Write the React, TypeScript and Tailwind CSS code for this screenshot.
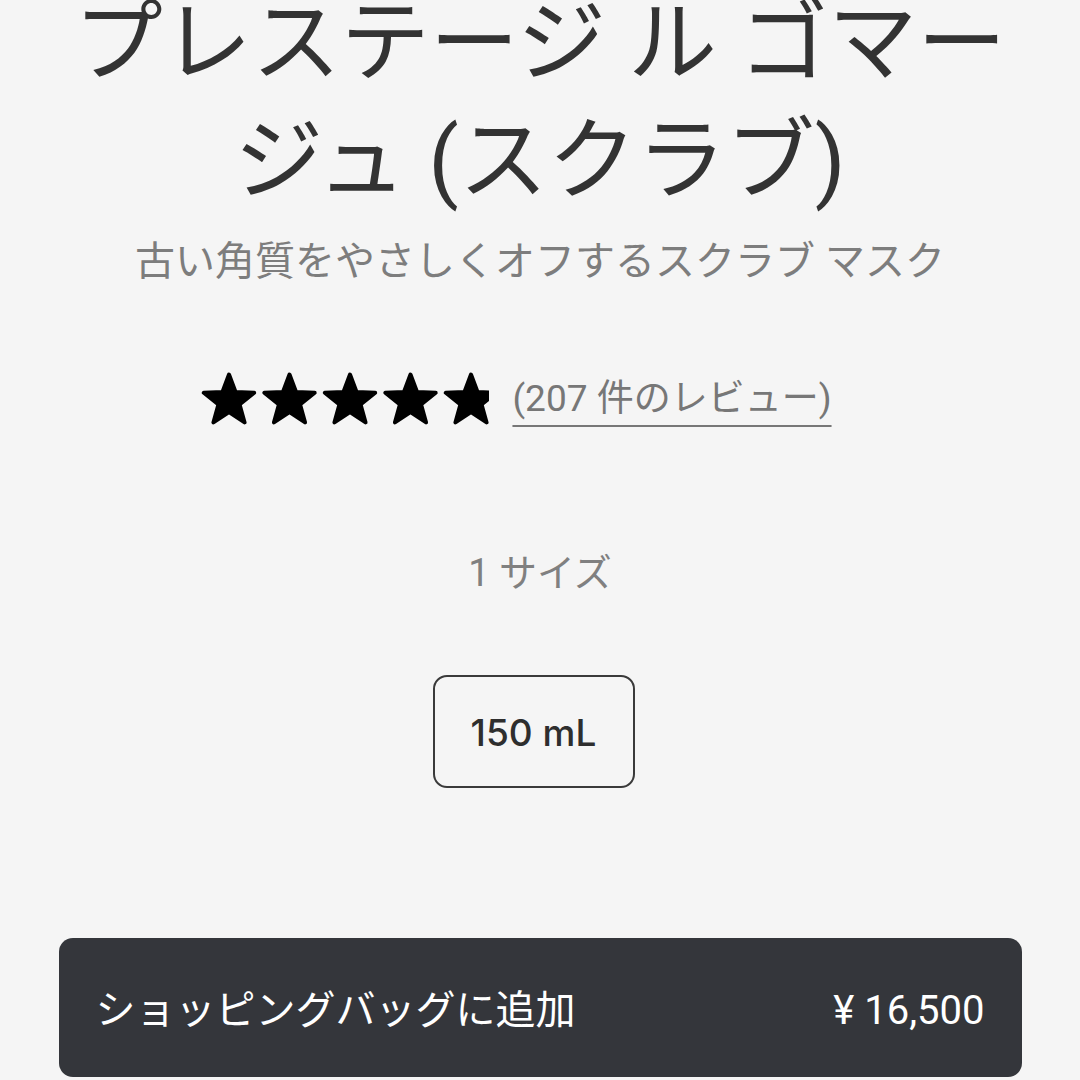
import React from 'react';

const jp = "font-['Roboto','Noto_Sans_CJK_JP',sans-serif]";

function starPath(cx: number, cy: number, r: number) {
  const pts: string[] = [];
  for (let k = 0; k < 10; k++) {
    const rad = k % 2 === 0 ? r : r * 0.42;
    const a = ((-90 + k * 36) * Math.PI) / 180;
    pts.push(`${(cx + rad * Math.cos(a)).toFixed(2)} ${(cy + rad * Math.sin(a)).toFixed(2)}`);
  }
  return `M${pts.join(' L')} Z`;
}

function Stars() {
  const d = starPath(28, 30, 26.5);
  return (
    <div className="w-[288px] h-[56px] overflow-hidden shrink-0">
      <svg width="310" height="56" viewBox="0 0 310 56">
        {[0, 1, 2, 3, 4].map((i) => (
          <path
            key={i}
            d={d}
            transform={`translate(${i * 60.5} 0)`}
            fill="#000"
            stroke="#000"
            strokeWidth="4"
            strokeLinejoin="round"
          />
        ))}
      </svg>
    </div>
  );
}

export default function App() {
  return (
    <div className={`w-[1080px] h-[1080px] overflow-hidden bg-[#f5f5f5] ${jp}`}>
      <div className="flex flex-col items-center">
        <h1 className="-mt-[16px] text-center text-[89px] leading-[118px] font-normal text-[#333333]">
          プレステージ ル ゴマー
          <br />
          ジュ (スクラブ)
        </h1>
        <p className="mt-[14px] text-[40px] leading-[56px] text-[#7d7d7d]">
          古い角質をやさしくオフするスクラブ マスク
        </p>

        <div className="mt-[81px] mr-[47px] flex items-center gap-[23px]">
          <Stars />
          <span className="text-[37px] leading-[48px] text-[#777777] underline decoration-2 underline-offset-[14px]">
            (207 件のレビュー)
          </span>
        </div>

        <p className="mt-[121px] text-[38px] leading-[50px] text-[#808080]">1 サイズ</p>

        <div className="mt-[77px] mr-[13px] w-[202px] h-[113px] rounded-[14px] border-2 border-[#3a3a3a] flex items-center justify-center">
          <span className="pt-[3px] font-['Inter','Noto_Sans_CJK_JP',sans-serif] text-[37px] font-medium text-[#2e2e2e]">
            150 mL
          </span>
        </div>

        <button className="mt-[150px] w-[963px] h-[139px] rounded-[14px] bg-[#34363b] px-[37px] pt-[6px] flex items-center justify-between text-white">
          <span className="text-[40px]">ショッピングバッグに追加</span>
          <span className="text-[40px]">¥ 16,500</span>
        </button>
      </div>
    </div>
  );
}
